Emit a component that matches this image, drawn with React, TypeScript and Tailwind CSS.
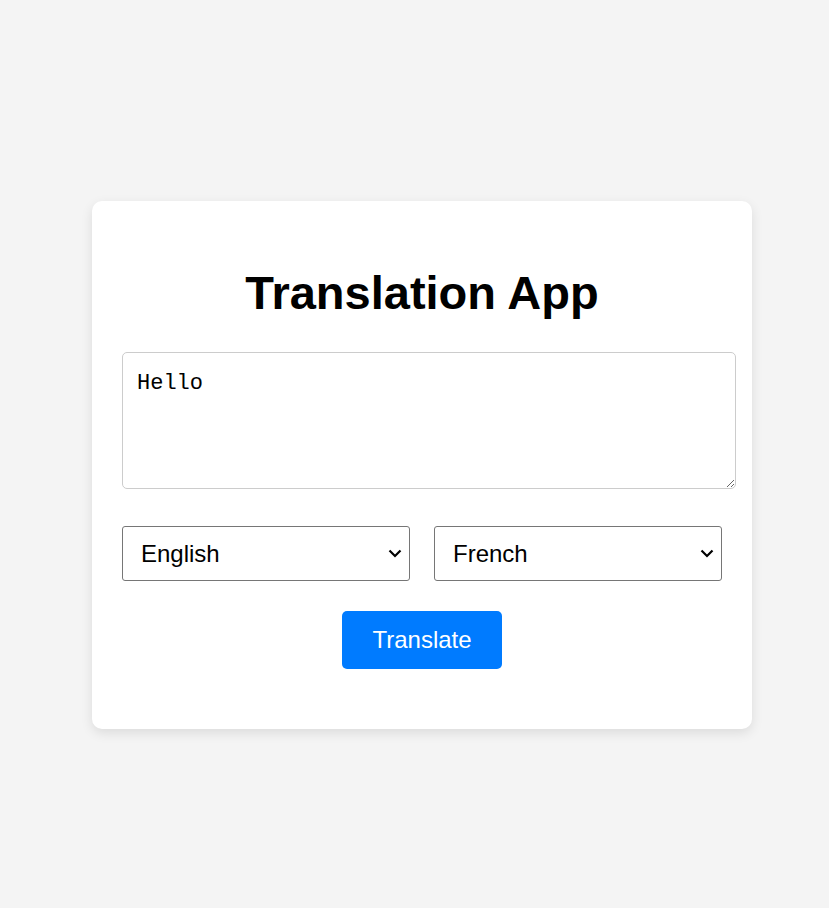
import { useState } from 'react';

const languages = ['English', 'French', 'Spanish', 'German', 'Italian'];

function LanguageSelect({ value, onChange }: { value: string; onChange: (v: string) => void }) {
  return (
    <div className="relative w-[288px]">
      <select
        value={value}
        onChange={(e) => onChange(e.target.value)}
        className="block h-[55px] w-full appearance-none rounded-[3px] border border-[#767676] bg-white pl-[18px] pr-[40px] text-[24px] text-black outline-none"
      >
        {languages.map((lang) => (
          <option key={lang} value={lang}>
            {lang}
          </option>
        ))}
      </select>
      <svg
        className="pointer-events-none absolute right-[8px] top-[23px]"
        width="14"
        height="9"
        viewBox="0 0 14 9"
        fill="none"
      >
        <path d="M1.5 1.5 L7 7 L12.5 1.5" stroke="#000" strokeWidth="2.2" />
      </svg>
    </div>
  );
}

export default function App() {
  const [text, setText] = useState('Hello');
  const [source, setSource] = useState('English');
  const [target, setTarget] = useState('French');

  return (
    <div className="min-h-[908px] bg-[#f4f4f4] pt-[201px] pl-[92px] font-['Liberation_Sans',Arial,sans-serif]">
      <div className="w-[660px] rounded-[10px] bg-white px-[30px] pt-[30px] pb-[60px] shadow-[0_4px_12px_rgba(0,0,0,0.1)]">
        <h1 className="mt-[34px] mb-[32px] text-center text-[47px] font-bold leading-[55px] text-black">
          Translation App
        </h1>

        <textarea
          value={text}
          onChange={(e) => setText(e.target.value)}
          className="block h-[137px] w-[614px] rounded-[5px] border border-[#cccccc] px-[14px] py-[18px] font-['Liberation_Mono',monospace] text-[22px] leading-[25px] text-black outline-none"
        />

        <div className="mt-[37px] flex gap-[24px]">
          <LanguageSelect value={source} onChange={setSource} />
          <LanguageSelect value={target} onChange={setTarget} />
        </div>

        <div className="mt-[30px] flex justify-center">
          <button className="h-[58px] rounded-[5px] bg-[#007bff] px-[30px] text-[24px] text-white">
            Translate
          </button>
        </div>
      </div>
    </div>
  );
}
